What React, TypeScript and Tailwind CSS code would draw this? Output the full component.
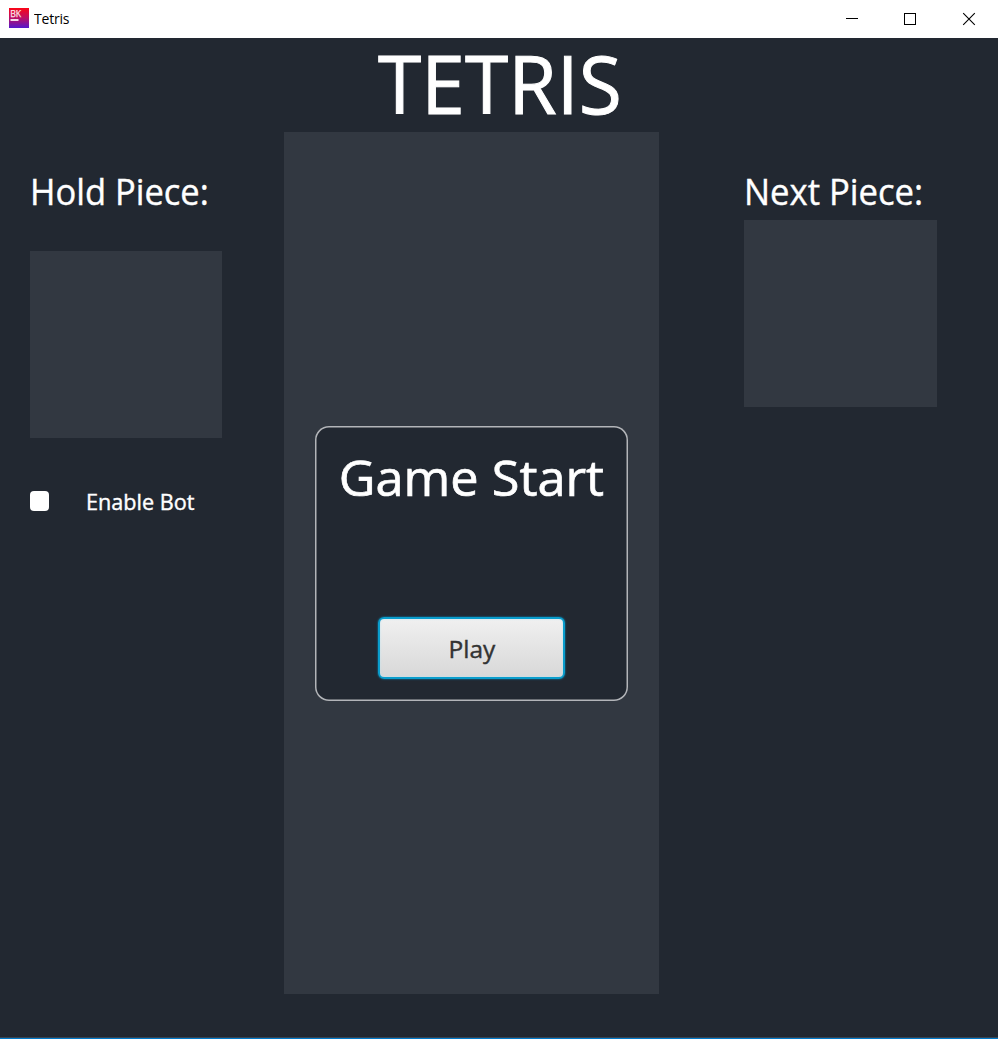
import React from "react";

function TitleBar() {
  return (
    <header className="flex h-[38px] shrink-0 items-center bg-white text-black">
      <svg className="ml-[9px] mb-[2px]" width="20" height="20" viewBox="0 0 20 20">
        <defs>
          <linearGradient id="badge" x1="0" y1="0" x2="0" y2="1">
            <stop offset="0" stopColor="#fb0516" />
            <stop offset="0.5" stopColor="#bb0f66" />
            <stop offset="1" stopColor="#5418cc" />
          </linearGradient>
        </defs>
        <rect width="20" height="20" fill="url(#badge)" />
        <text x="1.2" y="9.3" fontSize="9.5" fill="#fbe4ec" stroke="#fbe4ec" strokeWidth="0.25" fontFamily="Open Sans, sans-serif" textLength="11" lengthAdjust="spacingAndGlyphs">BK</text>
        <rect x="1.5" y="11" width="8" height="2" fill="#f3dcec" />
      </svg>
      <span className="ml-[5px] inline-block origin-left scale-y-[1.08] font-['Open_Sans',sans-serif] text-[14px] leading-[18px] tracking-[-0.2px]">Tetris</span>
      <div className="ml-auto flex items-center">
        <svg width="168" height="38" viewBox="0 0 168 38" fill="none" stroke="#000" strokeWidth="1">
          <path d="M16 18.5H28" />
          <rect x="74.5" y="13.5" width="11" height="11" />
          <path d="M133.2 13.2L144.8 24.8M144.8 13.2L133.2 24.8" strokeWidth="1.1" />
        </svg>
      </div>
    </header>
  );
}

export default function App() {
  return (
    <div className="flex h-[1039px] w-[998px] flex-col overflow-hidden bg-[#222831] font-['Open_Sans','Noto_Sans',sans-serif] text-white">
      <TitleBar />
      <h1 className="h-[94px] shrink-0 whitespace-nowrap pl-[378px] text-[81px] leading-[90px]">
        <span className="inline-block origin-left scale-x-[0.97] [-webkit-text-stroke:1px_white]">TETRIS</span>
      </h1>
      <main className="flex h-[905px] items-start">
        <section className="w-[284px] shrink-0 pl-[30px] pt-[36px]">
          <h2 className="whitespace-nowrap text-[36px] leading-[48px]">
            <span className="inline-block origin-left scale-x-[0.958] [-webkit-text-stroke:0.4px_white]">Hold Piece:</span>
          </h2>
          <div className="mt-[35px] h-[187px] w-[191.5px] bg-[#323841]" />
          <label className="mt-[53px] flex h-5 items-center">
            <span className="h-5 w-[19px] rounded-[4px] bg-white" />
            <span className="ml-[37px] inline-block origin-left scale-x-[0.983] whitespace-nowrap text-[22px] leading-5 [-webkit-text-stroke:0.4px_white]">Enable Bot</span>
          </label>
        </section>
        <section className="h-[862px] w-[375px] shrink-0 bg-[#323841] px-[31px] pt-[294px]">
          <div className="flex h-[275px] w-[313px] flex-col items-center rounded-[14px] bg-[#222831] pt-[21px] shadow-[inset_0_0_0_1.5px_#b3b5b9]">
            <h2 className="whitespace-nowrap text-[50px] leading-[60px]">
              <span className="inline-block scale-x-[1.01] [-webkit-text-stroke:0.7px_white]">Game Start</span>
            </h2>
            <button className="mt-[110px] h-[62px] w-[187px] rounded-[6px] border-2 border-[#0a9dcc] bg-gradient-to-b from-[#f0f0f0] to-[#d8d8d8] text-[24px] leading-[58px] text-[#333] shadow-[0_0_2px_#039ed3,inset_0_0_2px_#b5e2f2]">
              <span className="relative top-px inline-block scale-x-[1.02] [-webkit-text-stroke:0.4px_#333]">Play</span>
            </button>
          </div>
        </section>
        <section className="pl-[85px] pt-[36px]">
          <h2 className="whitespace-nowrap text-[36px] leading-[48px]">
            <span className="inline-block origin-left scale-x-[0.962] [-webkit-text-stroke:0.4px_white]">Next Piece:</span>
          </h2>
          <div className="mt-[4px] h-[186.5px] w-[192.5px] bg-[#323841]" />
        </section>
      </main>
      <footer className="h-[2px] shrink-0 border-t border-[#3a4552] bg-[#0078c8]" />
    </div>
  );
}
